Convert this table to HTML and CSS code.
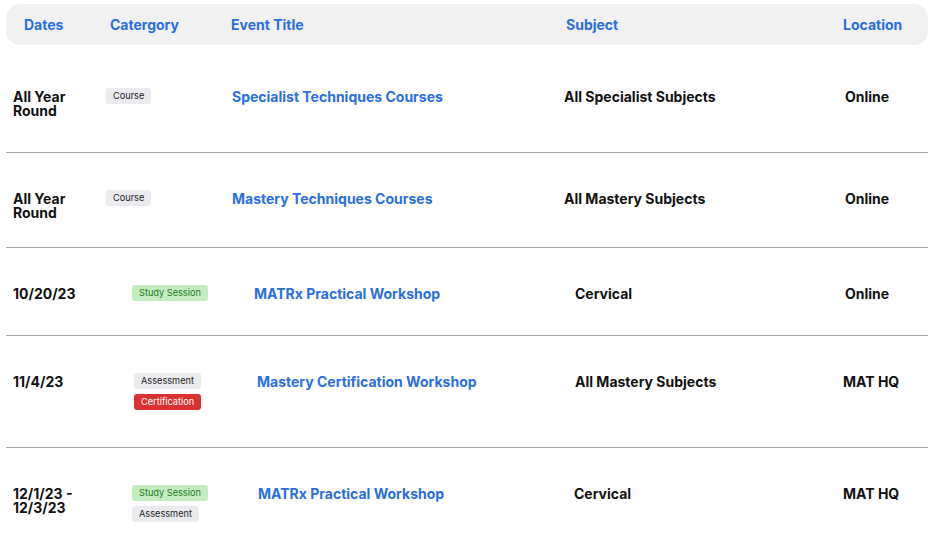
FILE: index.html
```html
<!DOCTYPE html>
<html>
<head>
<meta charset="utf-8">
<link rel="stylesheet" href="styles.css">
</head>
<body>
<div class="schedule">
  <div class="head">
    <div>Dates</div>
    <div>Catergory</div>
    <div>Event Title</div>
    <div>Subject</div>
    <div>Location</div>
  </div>

  <div class="row row-a first">
    <div class="date">All Year Round</div>
    <div class="cat"><span class="tag tag-gray">Course</span></div>
    <div class="title">Specialist Techniques Courses</div>
    <div class="subj">All Specialist Subjects</div>
    <div class="loc">Online</div>
  </div>

  <div class="row row-a second">
    <div class="date">All Year Round</div>
    <div class="cat"><span class="tag tag-gray">Course</span></div>
    <div class="title">Mastery Techniques Courses</div>
    <div class="subj">All Mastery Subjects</div>
    <div class="loc">Online</div>
  </div>

  <div class="row row-b">
    <div class="date">10/20/23</div>
    <div class="cat"><span class="tag tag-green">Study Session</span></div>
    <div class="title">MATRx Practical Workshop</div>
    <div class="subj">Cervical</div>
    <div class="loc">Online</div>
  </div>

  <div class="row row-c">
    <div class="date">11/4/23</div>
    <div class="cat"><span class="tag tag-gray">Assessment</span><span class="tag tag-red">Certification</span></div>
    <div class="title">Mastery Certification Workshop</div>
    <div class="subj">All Mastery Subjects</div>
    <div class="loc">MAT HQ</div>
  </div>

  <div class="row row-d last">
    <div class="date">12/1/23 - 12/3/23</div>
    <div class="cat"><span class="tag tag-green">Study Session</span><span class="tag tag-gray">Assessment</span></div>
    <div class="title">MATRx Practical Workshop</div>
    <div class="subj">Cervical</div>
    <div class="loc">MAT HQ</div>
  </div>
</div>
</body>
</html>
```

FILE: styles.css
```css
* { box-sizing: border-box; }
html, body { margin: 0; background: #fff; }
body {
  font-family: Inter, "Open Sans", "Liberation Sans", sans-serif;
  color: #111;
}
.schedule {
  padding: 4px 6px 0;
  width: 934px;
}
.head {
  display: grid;
  grid-template-columns: 86px 121px 335px 277px 1fr;
  align-items: center;
  height: 41px;
  padding-left: 18px;
  background: #f1f1f1;
  border-radius: 14px;
  color: #2a6ee0;
  font-weight: 700;
  font-size: 14px;
}
.row {
  display: grid;
  align-items: start;
  padding: 39px 0 34px 7px;
  border-bottom: 1px solid #ababab;
  font-weight: 700;
  font-size: 14px;
  line-height: 14px;
}
.row.first { padding-top: 45px; }
.row.second { padding-bottom: 27px; }
.row-c { padding-bottom: 37px; }
.row.last { border-bottom: none; }
.row-a { grid-template-columns: 93px 126px 332px 281px 1fr; }
.row-b { grid-template-columns: 119px 122px 321px 270px 1fr; }
.row-c { grid-template-columns: 121px 123px 318px 268px 1fr; }
.row-d { grid-template-columns: 119px 126px 316px 269px 1fr; }
.date { max-width: 72px; }
.title { color: #2a6ee0; }
.cat {
  display: flex;
  flex-direction: column;
  align-items: flex-start;
  gap: 5px;
  margin-top: -2px;
}
.tag {
  display: inline-block;
  font-family: Inter, "Liberation Sans", sans-serif;
  font-weight: 400;
  font-size: 9.2px;
  line-height: 16px;
  padding: 0 7px;
  border-radius: 3px;
}
.tag-gray { background: #e9ebee; color: #222; }
.tag-green { background: #c3ecc0; color: #1c7a1c; }
.tag-red { background: #dc3131; color: #fff; }
```
